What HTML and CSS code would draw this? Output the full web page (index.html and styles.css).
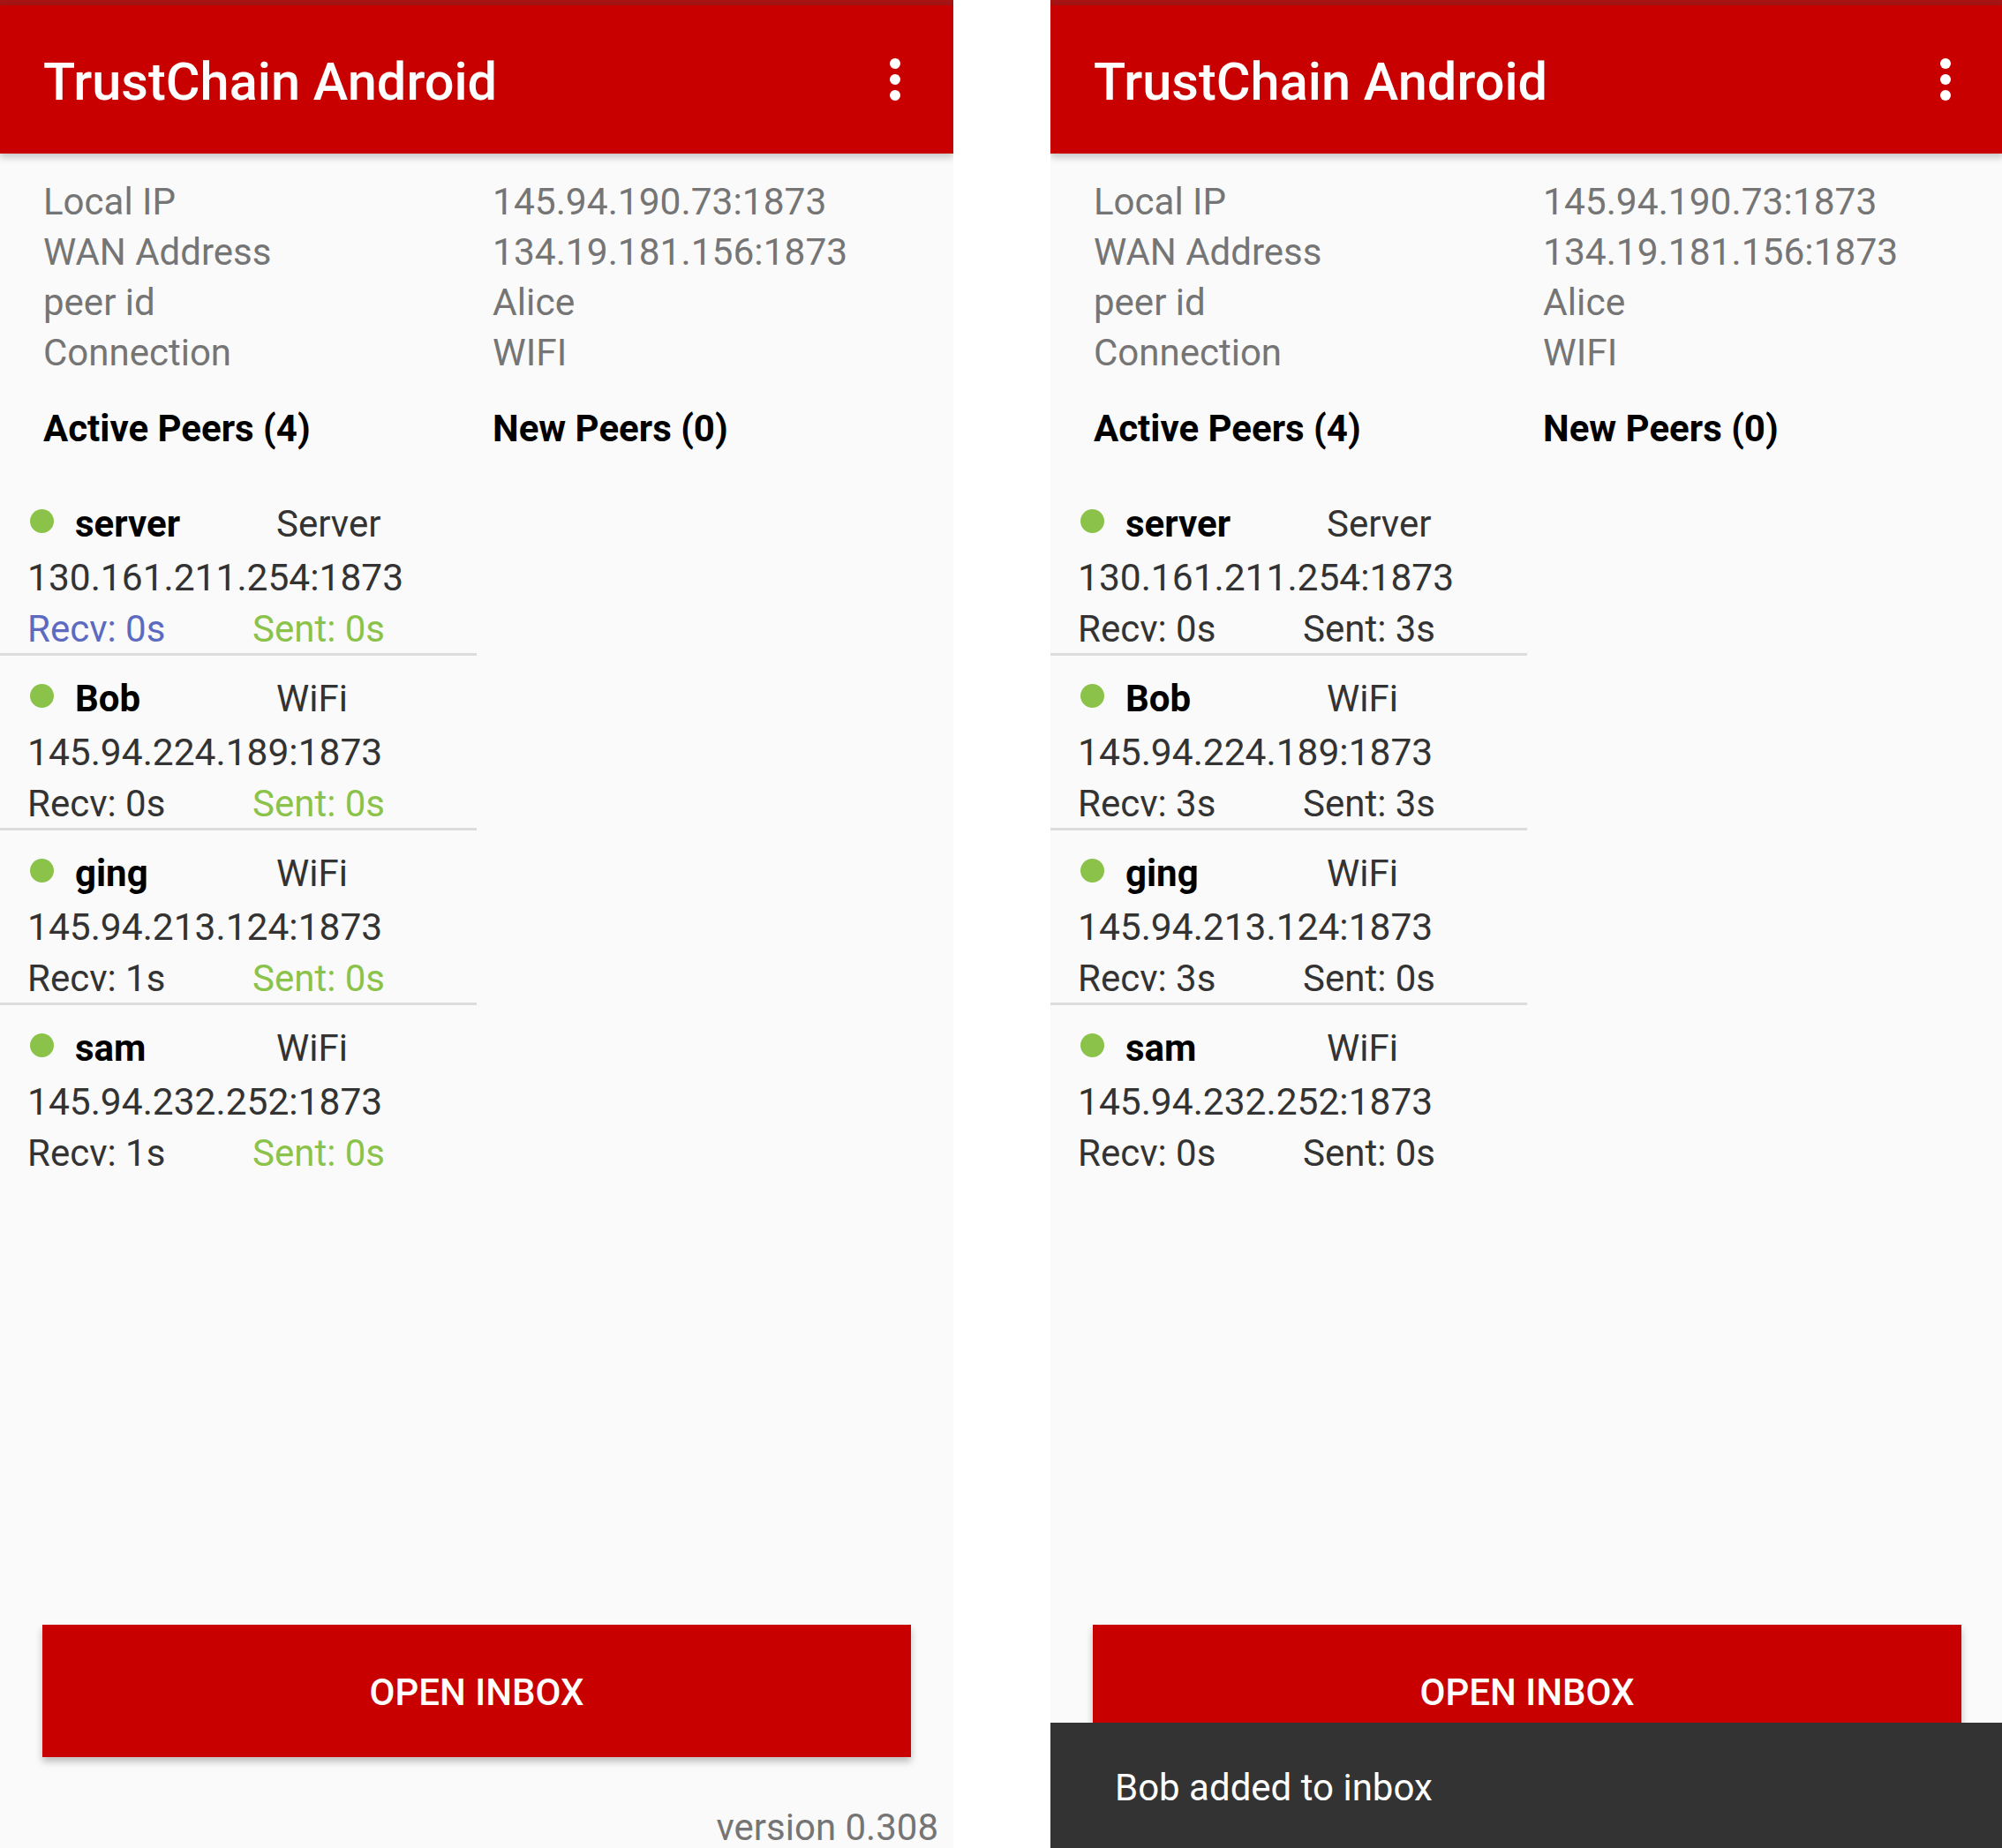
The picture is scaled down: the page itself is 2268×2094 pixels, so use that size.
FILE: index.html
```html
<!DOCTYPE html>
<html lang="en">
<head>
<meta charset="utf-8">
<title>TrustChain Android</title>
<link rel="stylesheet" href="styles.css">
</head>
<body>
<div class="stage">
  <section class="screen">
    <div class="status"></div>
    <header class="appbar">
      <h1 class="title">TrustChain Android</h1>
      <div class="menu"><span></span><span></span><span></span></div>
    </header>
    <div class="info">
      <div class="label">Local IP</div><div class="value">145.94.190.73:1873</div>
      <div class="label">WAN Address</div><div class="value">134.19.181.156:1873</div>
      <div class="label">peer id</div><div class="value">Alice</div>
      <div class="label">Connection</div><div class="value">WIFI</div>
    </div>
    <div class="peers">
      <div class="col">
        <div class="heading">Active Peers (4)</div>
        <ul class="list">
          <li class="peer">
            <div class="namerow"><span class="dot"></span><span class="name">server</span><span class="type">Server</span></div>
            <div class="addr">130.161.211.254:1873</div>
            <div class="times"><span class="recv blue">Recv: 0s</span><span class="sent green">Sent: 0s</span></div>
          </li>
          <li class="peer">
            <div class="namerow"><span class="dot"></span><span class="name">Bob</span><span class="type">WiFi</span></div>
            <div class="addr">145.94.224.189:1873</div>
            <div class="times"><span class="recv">Recv: 0s</span><span class="sent green">Sent: 0s</span></div>
          </li>
          <li class="peer">
            <div class="namerow"><span class="dot"></span><span class="name">ging</span><span class="type">WiFi</span></div>
            <div class="addr">145.94.213.124:1873</div>
            <div class="times"><span class="recv">Recv: 1s</span><span class="sent green">Sent: 0s</span></div>
          </li>
          <li class="peer">
            <div class="namerow"><span class="dot"></span><span class="name">sam</span><span class="type">WiFi</span></div>
            <div class="addr">145.94.232.252:1873</div>
            <div class="times"><span class="recv">Recv: 1s</span><span class="sent green">Sent: 0s</span></div>
          </li>
        </ul>
      </div>
      <div class="col col-new">
        <div class="heading">New Peers (0)</div>
      </div>
    </div>
    <div class="spacer"></div>
    <button class="inbox">OPEN INBOX</button>
    <div class="version">version 0.308</div>
  </section>

  <section class="screen">
    <div class="status"></div>
    <header class="appbar">
      <h1 class="title">TrustChain Android</h1>
      <div class="menu"><span></span><span></span><span></span></div>
    </header>
    <div class="info">
      <div class="label">Local IP</div><div class="value">145.94.190.73:1873</div>
      <div class="label">WAN Address</div><div class="value">134.19.181.156:1873</div>
      <div class="label">peer id</div><div class="value">Alice</div>
      <div class="label">Connection</div><div class="value">WIFI</div>
    </div>
    <div class="peers">
      <div class="col">
        <div class="heading">Active Peers (4)</div>
        <ul class="list">
          <li class="peer">
            <div class="namerow"><span class="dot"></span><span class="name">server</span><span class="type">Server</span></div>
            <div class="addr">130.161.211.254:1873</div>
            <div class="times"><span class="recv">Recv: 0s</span><span class="sent">Sent: 3s</span></div>
          </li>
          <li class="peer">
            <div class="namerow"><span class="dot"></span><span class="name">Bob</span><span class="type">WiFi</span></div>
            <div class="addr">145.94.224.189:1873</div>
            <div class="times"><span class="recv">Recv: 3s</span><span class="sent">Sent: 3s</span></div>
          </li>
          <li class="peer">
            <div class="namerow"><span class="dot"></span><span class="name">ging</span><span class="type">WiFi</span></div>
            <div class="addr">145.94.213.124:1873</div>
            <div class="times"><span class="recv">Recv: 3s</span><span class="sent">Sent: 0s</span></div>
          </li>
          <li class="peer">
            <div class="namerow"><span class="dot"></span><span class="name">sam</span><span class="type">WiFi</span></div>
            <div class="addr">145.94.232.252:1873</div>
            <div class="times"><span class="recv">Recv: 0s</span><span class="sent">Sent: 0s</span></div>
          </li>
        </ul>
      </div>
      <div class="col col-new">
        <div class="heading">New Peers (0)</div>
      </div>
    </div>
    <div class="spacer"></div>
    <button class="inbox">OPEN INBOX</button>
    <div class="version">version 0.308</div>
    <div class="snackbar">Bob added to inbox</div>
  </section>
</div>
</body>
</html>
```

FILE: styles.css
```css
html, body {
  margin: 0;
  padding: 0;
  background: #ffffff;
  overflow: hidden;
}

.stage {
  display: flex;
  gap: 110px;
  width: 2270px;
  height: 2094px;
  font-family: Roboto, "Noto Sans", "Liberation Sans", sans-serif;
}

.screen {
  position: relative;
  flex: none;
  width: 1080px;
  height: 2094px;
  background: #fafafa;
  display: flex;
  flex-direction: column;
  overflow: hidden;
}

.status {
  height: 6px;
  background: #a61414;
  flex: none;
}

.appbar {
  position: relative;
  z-index: 1;
  flex: none;
  height: 168px;
  background: #c80000;
  display: flex;
  align-items: center;
  justify-content: space-between;
  padding: 0 60px 0 49px;
  box-shadow: 0 4px 8px rgba(0, 0, 0, 0.22);
}

.title {
  margin: 0;
  padding-top: 5px;
  font-size: 59.5px;
  line-height: 70px;
  font-weight: 500;
  color: #ffffff;
}

.menu {
  display: flex;
  flex-direction: column;
  gap: 6px;
}

.menu span {
  width: 12px;
  height: 12px;
  border-radius: 50%;
  background: #ffffff;
}

.info {
  display: grid;
  grid-template-columns: 509px 1fr;
  padding: 26px 0 0 49px;
  line-height: 57px;
  color: #757575;
}

.label {
  font-size: 42px;
}

.value {
  font-size: 42.5px;
}

.peers {
  display: grid;
  grid-template-columns: 540px 540px;
  margin-top: 29px;
}

.heading {
  font-size: 42px;
  line-height: 57px;
  font-weight: 700;
  color: #000000;
  padding-left: 49px;
}

.col-new .heading {
  padding-left: 18px;
}

.list {
  list-style: none;
  margin: 31px 0 0;
  padding: 0;
}

.peer {
  padding: 19px 0 0 31px;
  border-bottom: 3px solid #dcdcdc;
  font-size: 42px;
  color: #333333;
}

.peer:last-child {
  border-bottom: none;
}

.namerow {
  display: flex;
  align-items: flex-start;
  line-height: 60px;
}

.dot {
  flex: none;
  width: 27px;
  height: 27px;
  margin: 13px 24px 0 3px;
  border-radius: 50%;
  background: #8bc34a;
}

.name {
  width: 228px;
  font-weight: 700;
  color: #000000;
}

.addr {
  font-size: 42.5px;
  line-height: 62px;
}

.times {
  display: flex;
  line-height: 54px;
}

.recv {
  width: 255px;
}

.blue {
  color: #5c6bc0;
}

.green {
  color: #8bc34a;
}

.spacer {
  flex: 1;
}

.inbox {
  flex: none;
  margin: 0 48px 53px;
  height: 150px;
  padding: 2px 0 0;
  border: none;
  background: #c80000;
  color: #ffffff;
  font-family: Roboto, "Noto Sans", "Liberation Sans", sans-serif;
  font-size: 42px;
  font-weight: 500;
  box-shadow: 0 5px 8px rgba(0, 0, 0, 0.25);
}

.version {
  flex: none;
  height: 50px;
  line-height: 53px;
  padding-right: 17px;
  text-align: right;
  font-size: 42px;
  color: #757575;
}

.snackbar {
  position: absolute;
  left: 0;
  right: 0;
  bottom: 0;
  height: 142px;
  display: flex;
  align-items: center;
  padding: 4px 0 0 73px;
  box-sizing: border-box;
  background: #333333;
  color: #ffffff;
  font-size: 42px;
  z-index: 2;
}
```
